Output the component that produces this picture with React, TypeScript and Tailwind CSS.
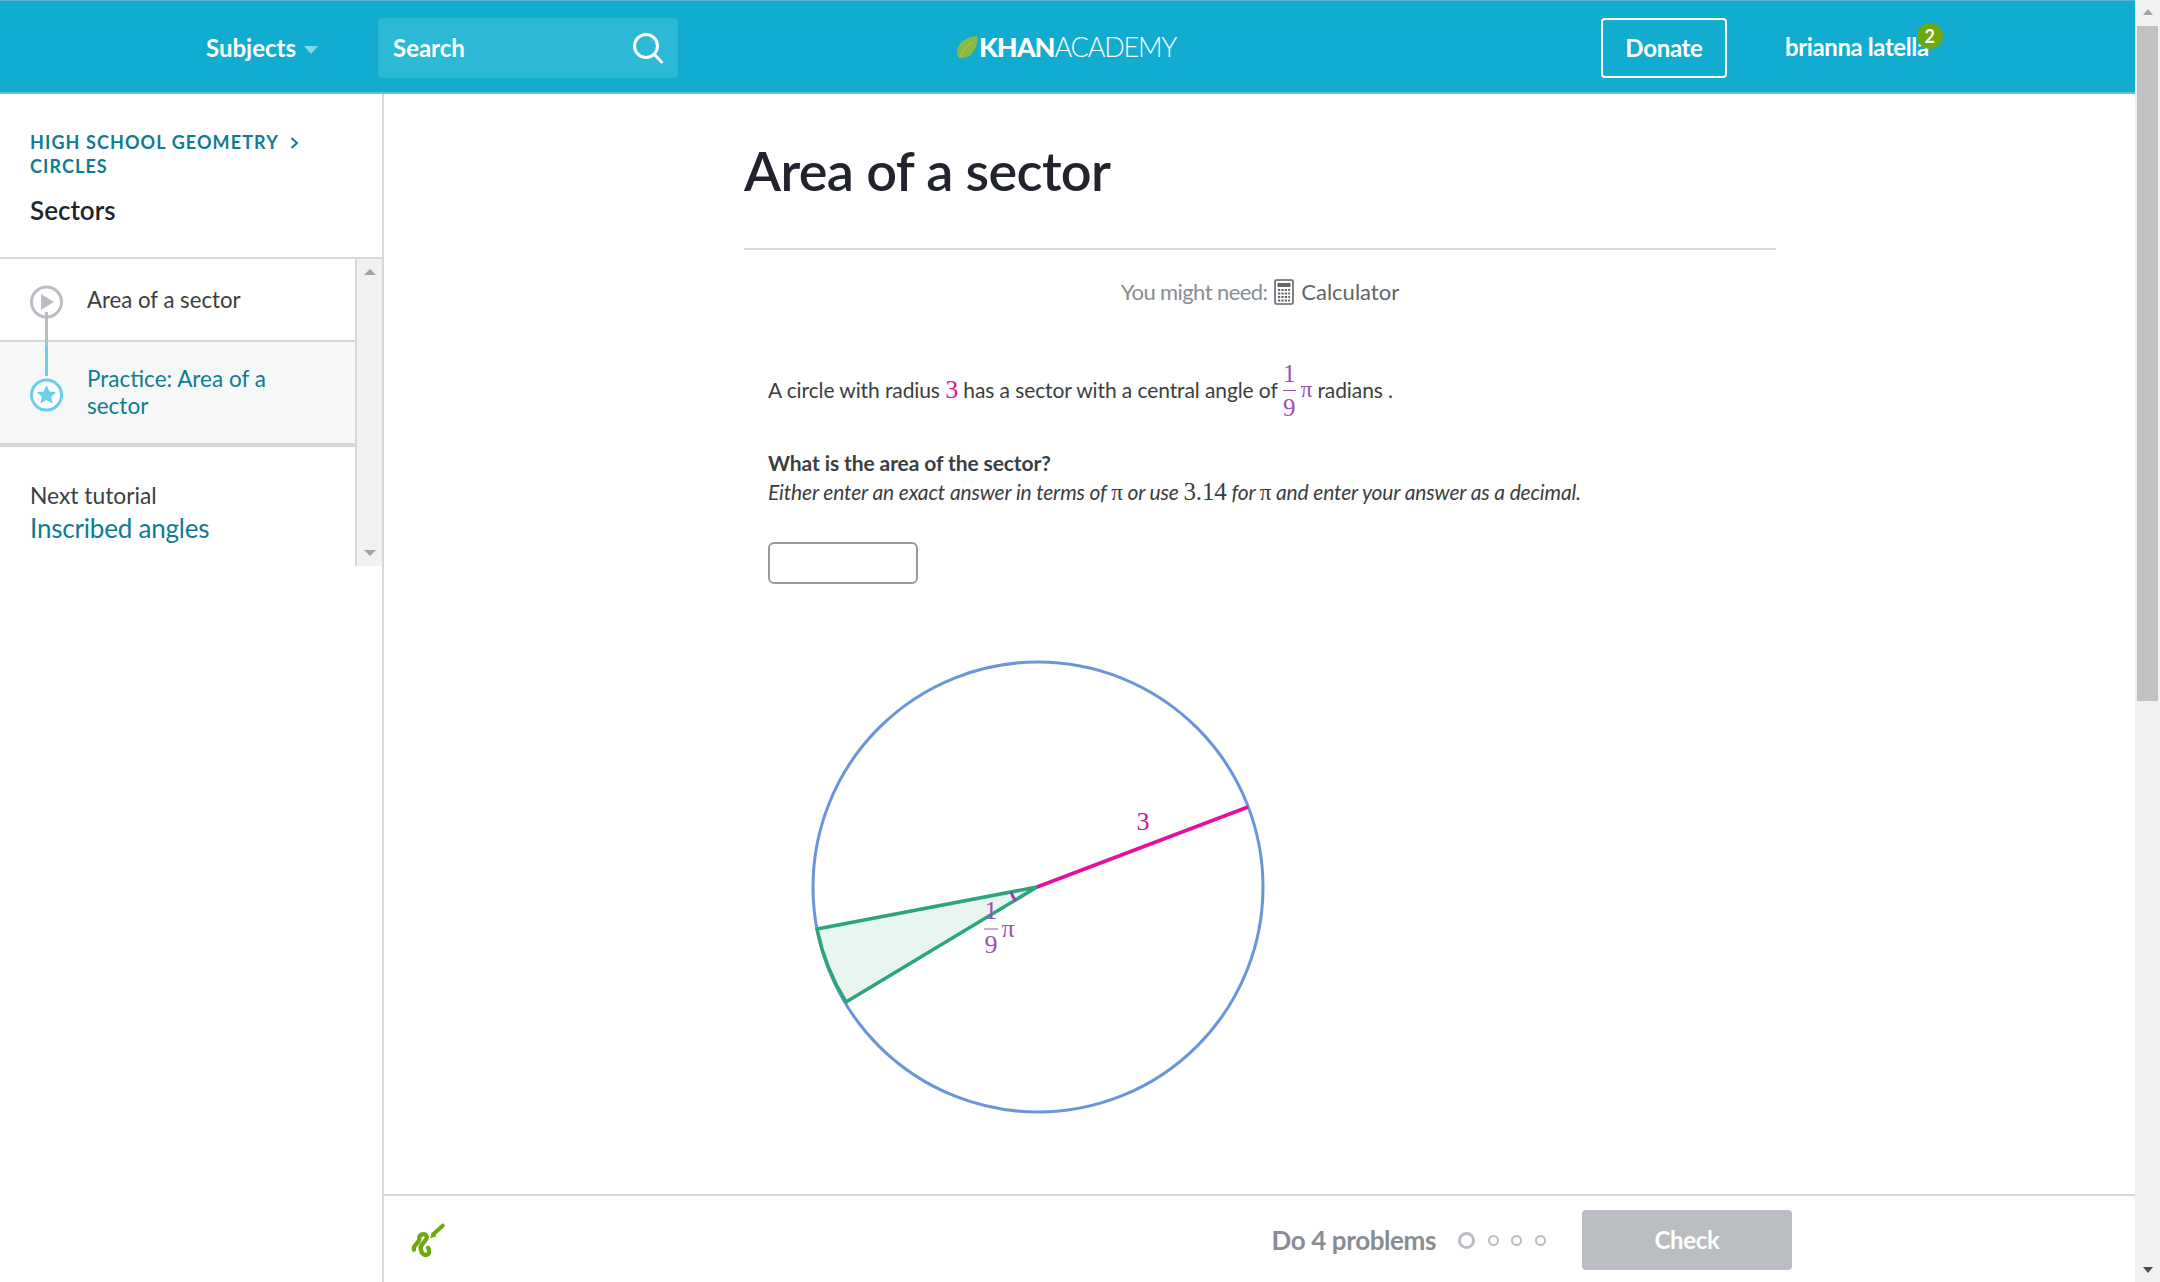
const lato = { fontFamily: 'Lato, "Open Sans", sans-serif' }

function Frac({ className }: { className: string }) {
  return (
    <span className={`inline-flex flex-col items-center font-['Liberation_Serif'] text-[25px] mx-[5px] ${className}`}>
      <span className="leading-[33px]">1</span>
      <span className="h-px w-[13px] bg-[#9d4fb8]" />
      <span className="leading-[33px]">9</span>
    </span>
  )
}

function Pi({ className = '' }: { className?: string }) {
  return <span className={`font-['Liberation_Serif'] not-italic text-[23px] ${className}`}>π</span>
}

function Header() {
  return (
    <header className="h-[94px] shrink-0 flex items-center bg-[#11acd0] border-t border-t-[#5fb4d0] border-b-2 border-b-[#5cc4dd] text-white relative">
      <div className="ml-[206px] w-[172px] mt-[2px] flex items-center gap-2">
        <span className="text-[24px] font-bold leading-none">Subjects</span>
        <span className="mt-1 w-0 h-0 border-x-[7px] border-x-transparent border-t-[8px] border-t-[#86d6e8]" />
      </div>
      <div className="w-[300px] h-[60px] mt-[3px] rounded bg-[#2cb9d6] flex items-center justify-between pl-[15px] pr-[14px]">
        <span className="text-[24px] font-bold leading-none">Search</span>
        <svg width="32" height="32" viewBox="0 0 32 32" fill="none" stroke="#fff" strokeWidth="3" strokeLinecap="round" className="shrink-0">
          <circle cx="14" cy="14" r="11.5" />
          <path d="M22.5 22.5 L29.5 30" />
        </svg>
      </div>
      <div className="ml-[277px] w-[225px] flex items-center">
        <svg width="24" height="24" viewBox="0 0 24 24" className="shrink-0">
          <path d="M4 23 C-1 15 4 3 22 1 C24 12 16 25 4 23 Z" fill="#8cb944" />
          <path d="M5 22 C8 15 12 11 17 7" stroke="#a9cc6c" strokeWidth="1" fill="none" />
        </svg>
        <span className="text-[27px] font-black leading-none tracking-[-1px]">KHAN</span>
        <span className="text-[27px] font-light leading-none tracking-[-1.2px]">ACADEMY</span>
      </div>
      <div className="ml-[421px] w-[126px] h-[60px] mt-[3px] rounded border-2 border-white flex items-center justify-center">
        <span className="text-[24px] font-bold leading-none tracking-[-0.3px]">Donate</span>
      </div>
      <div className="ml-[58px] mt-[4px] relative">
        <span className="text-[24px] font-bold leading-none tracking-[-0.4px]">brianna latella</span>
        <span className="absolute -right-[14px] -top-[12px] w-[26px] h-[26px] rounded-full bg-[#6fa80f] flex items-center justify-center text-[18px] font-bold leading-none">2</span>
      </div>
    </header>
  )
}

function Sidebar() {
  return (
    <aside className="w-[384px] shrink-0 border-r-2 border-r-[#d6d8da] flex flex-col">
      <div className="h-[165px] shrink-0 border-b-2 border-b-[#d6d8da] pl-[30px] pt-[36px]">
        <div className="text-[18px] font-bold uppercase tracking-[1.1px] leading-[24px] text-[#0f7c92]">
          <div className="flex items-center gap-[11px]">
            High school geometry
            <svg width="9" height="14" viewBox="0 0 9 14" fill="none" stroke="#0f7c92" strokeWidth="2" className="mt-[2px]">
              <path d="M1.5 2 L7 7 L1.5 12" />
            </svg>
          </div>
          <div>Circles</div>
        </div>
        <div className="mt-[16px] text-[26px] font-semibold leading-[32px] text-[#21242c]">Sectors</div>
      </div>
      <div className="h-[307px] flex relative">
        <div className="flex-1 flex flex-col">
          <div className="h-[83px] shrink-0 border-b-2 border-b-[#d6d8da] flex items-center pl-[87px] text-[22.2px] text-[#3b3e40]">
            Area of a sector
          </div>
          <div className="h-[105px] shrink-0 border-b-[4px] border-b-[#d6d8da] bg-[#f6f7f7] flex items-center pl-[87px] pr-[60px] pb-[2px] text-[22.5px] leading-[27px] text-[#0f7c92]">
            Practice: Area of a sector
          </div>
          <div className="pl-[30px] pt-[33px]">
            <div className="text-[22.8px] leading-[30px] text-[#3b3e40]">Next tutorial</div>
            <div className="mt-[1px] text-[26px] leading-[35px] tracking-[-0.2px] text-[#0f7c92]">Inscribed angles</div>
          </div>
        </div>
        <div className="w-[27px] shrink-0 bg-[#f1f1f1] border-l-2 border-l-[#d6d8da] flex flex-col items-center justify-between py-[10px]">
          <span className="w-0 h-0 border-x-[6px] border-x-transparent border-b-[6px] border-b-[#a3a3a3]" />
          <span className="w-0 h-0 border-x-[6px] border-x-transparent border-t-[6px] border-t-[#a3a3a3]" />
        </div>
        <svg width="40" height="130" viewBox="0 0 40 130" className="absolute left-[26px] top-[25px]">
          <circle cx="20.5" cy="18" r="15" fill="#fff" stroke="#babec2" strokeWidth="3" />
          <path d="M15 10 L28 18 L15 26 Z" fill="#babec2" />
          <path d="M20.5 28 V62" stroke="#babec2" strokeWidth="3" />
          <path d="M20.5 62 V92" stroke="#68d1e8" strokeWidth="3" />
          <circle cx="20.5" cy="111" r="15" fill="#fff" stroke="#68d1e8" strokeWidth="3" />
          <path d="M20.5 101 L23.4 107.4 L30.3 108.1 L25.2 112.8 L26.6 119.6 L20.5 116.1 L14.4 119.6 L15.8 112.8 L10.7 108.1 L17.6 107.4 Z" fill="#68d1e8" />
        </svg>
      </div>
    </aside>
  )
}

function Diagram() {
  return (
    <svg width="520" height="480" viewBox="768 650 520 480" className="block mt-[66px]">
      <circle cx="1038" cy="887" r="225" fill="none" stroke="#6a96d8" strokeWidth="3" />
      <path d="M1037 887 L817 929 A225 225 0 0 0 846 1002 Z" fill="#e9f6f0" stroke="#2ba57c" strokeWidth="3.5" strokeLinejoin="round" />
      <path d="M1037 887 L1248 807" stroke="#e60da0" strokeWidth="3.5" fill="none" />
      <path d="M1011 892 Q1013 898 1016 901" stroke="#8e44ad" strokeWidth="3" fill="none" />
      <text x="1143" y="829.5" fontFamily="Liberation Serif" fontSize="26" fill="#d5109a" textAnchor="middle">3</text>
      <g fontFamily="Liberation Serif" fontSize="26" fill="#9d4fb8">
        <text x="991" y="918.5" textAnchor="middle">1</text>
        <path d="M984 929 H998" stroke="#9d4fb8" strokeWidth="1" />
        <text x="991" y="952.5" textAnchor="middle">9</text>
        <text x="1008" y="937" textAnchor="middle">π</text>
      </g>
    </svg>
  )
}

function Footer() {
  return (
    <footer className="h-[88px] shrink-0 border-t-2 border-t-[#d6d8da] flex items-center relative">
      <svg width="40" height="40" viewBox="0 0 120 120" className="ml-[24px]" fill="none" strokeLinecap="round" strokeLinejoin="round">
        <path d="M18 92 C12 80 36 72 34 58 C33 46 50 40 56 52 C60 62 42 72 38 84 C36 96 44 108 54 108 C64 108 66 94 60 86" stroke="#6fa80f" strokeWidth="13" />
        <path d="M80 42 L104 20" stroke="#6fa80f" strokeWidth="12" />
        <path d="M66 58 L72 38 L86 52 Z" fill="#6fa80f" />
      </svg>
      <div className="ml-auto mr-[343px] mt-[2px] flex items-center">
        <span className="text-[26px] font-bold leading-none tracking-[-0.4px] text-[#888d93]">Do 4 problems</span>
        <div className="ml-[22px] w-[88px] flex items-center justify-between">
          <span className="w-[17px] h-[17px] rounded-full border-[3px] border-[#babec2]" />
          <span className="w-[11px] h-[11px] rounded-full border-2 border-[#babec2]" />
          <span className="w-[11px] h-[11px] rounded-full border-2 border-[#babec2]" />
          <span className="w-[11px] h-[11px] rounded-full border-2 border-[#babec2]" />
        </div>
        <div className="ml-[36px] w-[210px] h-[60px] rounded bg-[#babec2] flex items-center justify-center text-[24px] font-bold tracking-[-0.3px] text-white">Check</div>
      </div>
    </footer>
  )
}

function Scrollbar() {
  return (
    <div className="w-[25px] shrink-0 bg-[#f1f1f1] flex flex-col items-center justify-between pt-[9px] pb-[9px] relative">
      <span className="w-0 h-0 border-x-[5px] border-x-transparent border-b-[6px] border-b-[#a3a3a3]" />
      <div className="absolute left-[2px] right-[2px] top-[26px] h-[675px] bg-[#c1c1c1]" />
      <span className="w-0 h-0 border-x-[5px] border-x-transparent border-t-[6px] border-t-[#505050]" />
    </div>
  )
}

export default function App() {
  return (
    <div className="w-[2160px] h-[1282px] overflow-hidden flex bg-white" style={lato}>
      <div className="flex-1 flex flex-col min-w-0">
        <Header />
        <div className="flex-1 flex min-h-0">
          <Sidebar />
          <main className="flex-1 flex flex-col min-w-0">
            <div className="flex-1 min-h-0 overflow-hidden pl-[360px]">
              <div className="w-[1032px]">
                <h1 className="pt-[45px] pb-[45px] text-[54px] font-semibold leading-[64px] tracking-[-0.6px] text-[#21242c] border-b-2 border-b-[#d6d8da]">Area of a sector</h1>
                <div className="mt-[26px] flex items-center justify-center gap-[7px] text-[22px] leading-[32px]">
                  <span className="text-[#888d93] tracking-[-0.6px]">You might need:</span>
                  <svg width="20" height="26" viewBox="0 0 20 26" className="shrink-0">
                    <rect x="1" y="1" width="18" height="24" rx="1.5" fill="#fff" stroke="#626569" strokeWidth="1.6" />
                    <rect x="3.5" y="4" width="13" height="4" fill="#626569" />
                    <path d="M4 11 H16 M4 14.5 H16 M4 18 H16 M4 21.5 H16" stroke="#626569" strokeWidth="2.2" strokeDasharray="2.2 1.2" />
                  </svg>
                  <span className="text-[#626569]">Calculator</span>
                </div>
                <div className="ml-[24px]">
                  <p className="mt-[50px] text-[21px] leading-[30px] tracking-[-0.1px] text-[#3b3e40] flex items-center h-[64px]">
                    <span>A circle with radius&nbsp;</span>
                    <span className="font-['Liberation_Serif'] text-[26px] text-[#e60da0]">3</span>
                    <span>&nbsp;has a sector with a central angle of</span>
                    <Frac className="text-[#9d4fb8]" />
                    <Pi className="text-[#9d4fb8]" />
                    <span>&nbsp;radians .</span>
                  </p>
                  <p className="mt-[26px] text-[21px] font-bold leading-[30px] tracking-[-0.1px] text-[#3b3e40]">What is the area of the sector?</p>
                  <p className="text-[21px] italic leading-[28px] tracking-[-0.15px] text-[#3b3e40]">
                    Either enter an exact answer in terms of <Pi /> or use <span className="font-['Liberation_Serif'] not-italic text-[25px]">3.14</span> for <Pi /> and enter your answer as a decimal.
                  </p>
                  <div className="mt-[35px] w-[150px] h-[42px] rounded-[6px] border-2 border-[#9a9a9a]" />
                  <Diagram />
                </div>
              </div>
            </div>
            <Footer />
          </main>
        </div>
      </div>
      <Scrollbar />
    </div>
  )
}
